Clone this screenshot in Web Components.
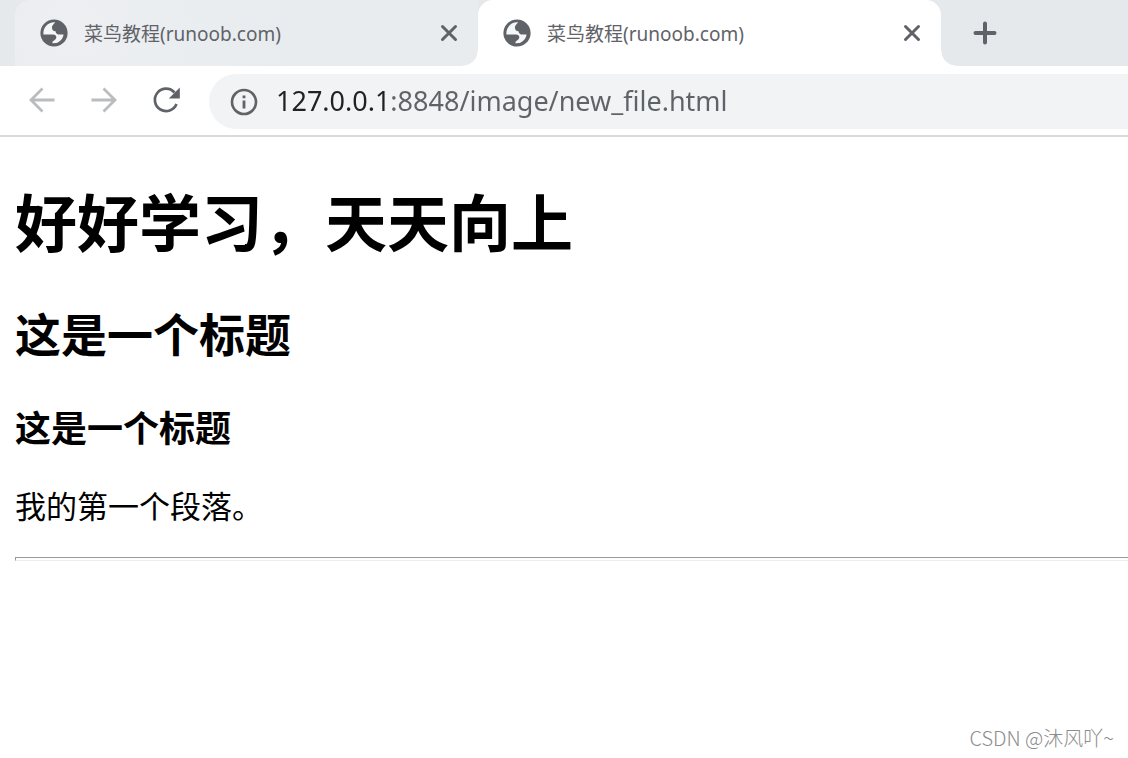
<!DOCTYPE html>
<html lang="zh-CN">
<head>
<meta charset="utf-8">
<title>菜鸟教程(runoob.com)</title>
<style>
body { margin: 0; background: #fff; font-family: "Noto Sans", "Noto Sans CJK SC", sans-serif; }
</style>
</head>
<body>
<browser-window>
  <tab-strip slot="tabs">
    <browser-tab label="菜鸟教程(runoob.com)"></browser-tab>
    <browser-tab label="菜鸟教程(runoob.com)" active></browser-tab>
  </tab-strip>
  <tool-bar slot="toolbar"><address-bar value="127.0.0.1:8848/image/new_file.html"></address-bar></tool-bar>
  <page-view>
    <h1>好好学习，天天向上</h1>
    <h2>这是一个标题</h2>
    <h3>这是一个标题</h3>
    <p>我的第一个段落。</p>
    <hr>
  </page-view>
  <water-mark slot="mark">CSDN @沐风吖~</water-mark>
</browser-window>
<script>
const define = (name, html, setup) => customElements.define(name, class extends HTMLElement {
  constructor() {
    super();
    this.attachShadow({ mode: "open" }).innerHTML = html;
  }
  connectedCallback() { if (setup) setup(this, this.shadowRoot); }
});

define("browser-window", `
<style>
:host { display: flex; flex-direction: column; min-height: 100vh; position: relative; overflow: hidden; }
main { flex: 1; }
::slotted(water-mark) { position: absolute; right: 14px; bottom: 6px; }
</style>
<slot name="tabs"></slot><slot name="toolbar"></slot><main><slot></slot></main><slot name="mark"></slot>`);

define("tab-strip", `
<style>
:host { display: flex; align-items: stretch; height: 66px; padding-left: 15px; background: #e5e9ec; }
button { width: 56px; margin-left: 16px; padding: 0; border: 0; background: none; display: grid; place-items: center; }
svg { display: block; }
</style>
<slot></slot>
<button aria-label="新标签页"><svg width="24" height="24" viewBox="0 0 24 24" fill="none" stroke="#5f6368" stroke-width="4" stroke-linecap="round"><path d="M12 2.500V21.500M2.500 12H21.500"/></svg></button>`);

define("browser-tab", `
<style>
:host { display: flex; align-items: center; flex: 0 1 463px; min-width: 0; box-sizing: border-box; padding: 0 15px 0 25px; border-radius: 15px 15px 0 0; position: relative;
  background: radial-gradient(circle at 60px 30px, #edeff2, #e8ecef 220px); color: #5f6368; }
:host([active]) { background: #fff; z-index: 1; }
:host(:not([active])) { border-radius: 15px 0 0 0; }
:host([active])::before, :host([active])::after { content: ""; position: absolute; bottom: 0; width: 15px; height: 15px; }
:host([active])::before { right: 100%; background: radial-gradient(circle at 0 0, #e8ecef 14px, #fff 15px); }
:host([active])::after { left: 100%; background: radial-gradient(circle at 100% 0, #e5e9ec 14px, #fff 15px); }
span { flex: 1; margin-left: 16px; padding-top: 2px; font-size: 19px; line-height: 28px; white-space: nowrap; overflow: hidden; }
button { width: 28px; height: 28px; padding: 0; border: 0; background: none; display: grid; place-items: center; }
svg { display: block; flex: none; }
</style>
<svg width="28" height="28" viewBox="0 0 28 28"><circle cx="14" cy="14" r="13.600" fill="#5f6368"/><path fill="#fff" fill-opacity=".94" d="M15.200 3.300C13 6 11.500 7 12 9.200c.4 1.800 1.200 3 3.500 3 .3 2 1.200 3.200 3.200 3.400h4.800c-.2 3-2.300 6.500-6.800 8.500l-4.200.2c-.3-1.200.1-1.800 1.200-2.500 1.400-.8 2.500-1.800 2.600-3.500.1-1.800-1.400-2.800-3.200-2.800H3.400C2.800 8 8.500 2.700 15.200 3.300z"/></svg>
<span></span>
<button aria-label="关闭"><svg width="20" height="20" viewBox="0 0 20 20" fill="none" stroke="#5f6368" stroke-width="3" stroke-linecap="round"><path d="M3.500 3.500 16.500 16.500M16.500 3.500 3.500 16.500"/></svg></button>`,
(el, root) => { root.querySelector("span").textContent = el.getAttribute("label"); });

define("tool-bar", `
<style>
:host { display: flex; align-items: center; height: 67px; padding: 2px 0 0 24px; border-bottom: 2px solid #dadada; background: #fff; }
button { width: 36px; height: 40px; margin: 0 26px 4px 0; padding: 0; border: 0; background: none; display: grid; place-items: center; color: #babcbe; }
button.reload { color: #5f6368; }
svg { display: block; }
slot { display: block; flex: 1; min-width: 0; }
</style>
<button aria-label="后退"><svg width="28" height="28" viewBox="0 0 28 28" fill="none" stroke="currentColor" stroke-width="2.800"><path d="M26.500 14H3M14.500 2.500 3 14 14.500 25.500"/></svg></button>
<button aria-label="前进"><svg width="28" height="28" viewBox="0 0 28 28" fill="none" stroke="currentColor" stroke-width="2.800"><path d="M1.500 14H25M13.500 2.500 25 14 13.500 25.500"/></svg></button>
<button class="reload" aria-label="重新加载"><svg width="28" height="28" viewBox="0 0 28 28"><path d="M22.500 6.500A11.200 11.200 0 1 0 24.500 18" fill="none" stroke="currentColor" stroke-width="2.700"/><path d="M27.800 1.500V12.500H16.800z" fill="currentColor"/></svg></button>
<slot></slot>`);

define("address-bar", `
<style>
:host { display: flex; align-items: center; height: 55px; margin-left: -1px; padding-left: 21px; border-radius: 28px 0 0 28px; background: #f1f3f4; }
svg { display: block; flex: none; }
input { flex: 1; min-width: 0; box-sizing: border-box; height: 48px; margin-left: 18px; padding: 0 0 2px; border: 0; outline: 0; font: 27px/40px "Noto Sans", sans-serif;
  background: linear-gradient(90deg, #202124 114px, #5f6368 114px); -webkit-background-clip: text; background-clip: text; color: transparent; }
</style>
<svg width="28" height="28" viewBox="0 0 28 28"><circle cx="14" cy="14" r="12" fill="none" stroke="#5f6368" stroke-width="2.600"/><path fill="#5f6368" d="M12.600 7.500h2.800v2.800h-2.800zM12.600 12.500h2.800v8h-2.800z"/></svg>
<input type="text" aria-label="地址" spellcheck="false">`,
(el, root) => { root.querySelector("input").value = el.getAttribute("value"); });

define("page-view", `
<style>
:host { display: block; padding-left: 15px; color: #000; }
::slotted(*) { margin: 0; }
::slotted(h1) { font-size: 62px; line-height: 84px; padding-top: 44px; }
::slotted(h2) { font-size: 46px; line-height: 62px; padding-top: 38px; }
::slotted(h3) { font-size: 36px; line-height: 48px; padding-top: 40px; }
::slotted(p) { font-size: 31px; line-height: 42px; padding-top: 32px; }
::slotted(hr) { margin-top: 30px; height: 2px; border: solid; border-width: 1px 0 1px 1px; border-color: #9a9a9a #eee #eee #9a9a9a; }
</style>
<slot></slot>`);

define("water-mark", `
<style>
:host { display: block; font: 300 20px/28px "Noto Sans CJK SC", sans-serif; color: #8c8c8c; white-space: nowrap; }
</style>
<slot></slot>`);
</script>
</body>
</html>
